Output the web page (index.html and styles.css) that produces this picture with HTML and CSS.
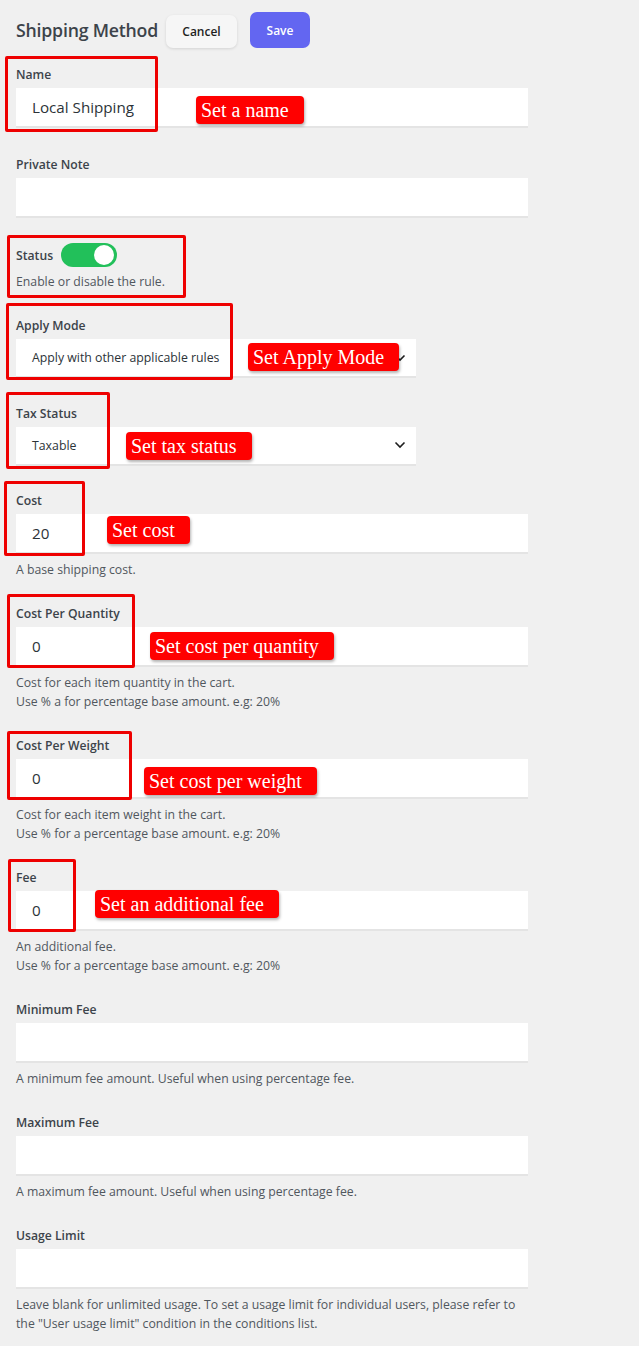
FILE: index.html
```html
<!DOCTYPE html>
<html lang="en">
<head>
<meta charset="utf-8">
<title>Shipping Method</title>
<link rel="stylesheet" href="styles.css">
</head>
<body>
<div class="page">
  <div class="header">
    <h1 class="title">Shipping Method</h1>
    <button class="btn btn-cancel">Cancel</button>
    <button class="btn btn-save">Save</button>
  </div>

  <div class="field">
    <div class="label">Name</div>
    <div class="input"><span class="val">Local Shipping</span></div>
    <div class="mark mark-name"></div>
    <div class="note note-name">Set a name</div>
  </div>

  <div class="field">
    <div class="label">Private Note</div>
    <div class="input"></div>
  </div>

  <div class="field">
    <div class="status-row">
      <div class="label label-inline">Status</div>
      <div class="toggle"><span class="knob"></span></div>
    </div>
    <div class="desc desc-status">Enable or disable the rule.</div>
    <div class="mark mark-status"></div>
  </div>

  <div class="field field-select">
    <div class="label">Apply Mode</div>
    <div class="select"><span class="sval">Apply with other applicable rules</span>
      <svg class="chev" viewBox="0 0 12 8" width="12" height="8"><path d="M1.5 1.5 L6 6 L10.5 1.5" fill="none" stroke="#1e1e1e" stroke-width="1.6"/></svg>
    </div>
    <div class="mark mark-apply"></div>
    <div class="note note-apply">Set Apply Mode</div>
  </div>

  <div class="field field-select">
    <div class="label">Tax Status</div>
    <div class="select"><span class="sval">Taxable</span>
      <svg class="chev" viewBox="0 0 12 8" width="12" height="8"><path d="M1.5 1.5 L6 6 L10.5 1.5" fill="none" stroke="#1e1e1e" stroke-width="1.6"/></svg>
    </div>
    <div class="mark mark-tax"></div>
    <div class="note note-tax">Set tax status</div>
  </div>

  <div class="field">
    <div class="label">Cost</div>
    <div class="input"><span class="val">20</span></div>
    <div class="desc">A base shipping cost.</div>
    <div class="mark mark-cost"></div>
    <div class="note note-cost">Set cost</div>
  </div>

  <div class="field">
    <div class="label">Cost Per Quantity</div>
    <div class="input"><span class="val">0</span></div>
    <div class="desc">Cost for each item quantity in the cart.<br>Use % a for percentage base amount. e.g: 20%</div>
    <div class="mark mark-cpq"></div>
    <div class="note note-cpq">Set cost per quantity</div>
  </div>

  <div class="field">
    <div class="label">Cost Per Weight</div>
    <div class="input"><span class="val">0</span></div>
    <div class="desc">Cost for each item weight in the cart.<br>Use % for a percentage base amount. e.g: 20%</div>
    <div class="mark mark-cpw"></div>
    <div class="note note-cpw">Set cost per weight</div>
  </div>

  <div class="field">
    <div class="label">Fee</div>
    <div class="input"><span class="val">0</span></div>
    <div class="desc">An additional fee.<br>Use % for a percentage base amount. e.g: 20%</div>
    <div class="mark mark-fee"></div>
    <div class="note note-fee">Set an additional fee</div>
  </div>

  <div class="field">
    <div class="label">Minimum Fee</div>
    <div class="input"></div>
    <div class="desc">A minimum fee amount. Useful when using percentage fee.</div>
  </div>

  <div class="field">
    <div class="label">Maximum Fee</div>
    <div class="input"></div>
    <div class="desc">A maximum fee amount. Useful when using percentage fee.</div>
  </div>

  <div class="field">
    <div class="label">Usage Limit</div>
    <div class="input"></div>
    <div class="desc">Leave blank for unlimited usage. To set a usage limit for individual users, please refer to<br>the "User usage limit" condition in the conditions list.</div>
  </div>
</div>
</body>
</html>
```

FILE: styles.css
```css
* { box-sizing: border-box; }

html, body {
  margin: 0;
  padding: 0;
  background: #f0f0f0;
}

body {
  font-family: "Open Sans", "Noto Sans", "Liberation Sans", sans-serif;
  color: #3c434a;
}

.page {
  width: 639px;
  padding: 12px 0 0 16px;
}

.header {
  display: flex;
  align-items: center;
  height: 36px;
  margin-bottom: 16px;
}

.title {
  margin: 0 8px 0 0;
  font-size: 17.7px;
  font-weight: 600;
  color: #3c434a;
  letter-spacing: -0.2px;
}

.btn {
  font-family: inherit;
  border: none;
  font-size: 12px;
  font-weight: 600;
  border-radius: 7px;
  cursor: pointer;
}

.btn-cancel {
  width: 71px;
  height: 33px;
  margin-top: 3px;
  background: #f6f6f6;
  color: #1e1e1e;
  box-shadow: 0 1px 3px rgba(0, 0, 0, 0.12);
  margin-right: 13px;
}

.btn-save {
  width: 60px;
  height: 36px;
  background: #6366f1;
  color: #ffffff;
}

.field {
  position: relative;
  margin-bottom: 25.5px;
}

.field-select {
  margin-bottom: 24.5px;
}

.label {
  font-size: 12.2px;
  font-weight: 600;
  line-height: 21px;
  margin-bottom: 3px;
  color: #3c434a;
}

.label-inline {
  margin: 0;
}

.input {
  width: 512px;
  height: 40px;
  background: #ffffff;
  border-bottom: 2px solid #e4e4e4;
  display: flex;
  align-items: center;
  padding-left: 16px;
}

.val {
  font-size: 15.2px;
  color: #2c3338;
}

.select {
  width: 400px;
  height: 39px;
  background: #ffffff;
  border-bottom: 2px solid #e4e4e4;
  display: flex;
  align-items: center;
  justify-content: space-between;
  padding: 0 10px 0 16px;
}

.sval {
  font-size: 12.3px;
  color: #2c3338;
}

.chev {
  display: block;
}

.desc {
  font-size: 12.25px;
  line-height: 19px;
  color: #50575e;
  margin-top: 6px;
  margin-bottom: -1.5px;
}

.desc-status {
  margin-top: 5px;
}

.status-row {
  display: flex;
  align-items: center;
  gap: 8px;
  height: 24px;
}

.toggle {
  width: 56px;
  height: 24px;
  border-radius: 12px;
  background: #22c05a;
  position: relative;
}

.knob {
  position: absolute;
  right: 3px;
  top: 2px;
  width: 20px;
  height: 20px;
  border-radius: 50%;
  background: #ffffff;
}

.mark {
  position: absolute;
  border: 3px solid #ee0000;
  border-radius: 2px;
  pointer-events: none;
}

.note {
  position: absolute;
  background: #ff0000;
  color: #ffffff;
  font-family: "Liberation Serif", "Times New Roman", serif;
  font-size: 20px;
  line-height: 28px;
  height: 28px;
  padding: 0 15px 0 5px;
  border-radius: 4px;
  white-space: nowrap;
  box-shadow: 1px 2px 3px rgba(0, 0, 0, 0.3);
}

.mark-name { left: -11px; top: -8px; width: 153px; height: 76px; }
.note-name { left: 180px; top: 32px; }

.mark-status { left: -9px; top: -8px; width: 179px; height: 63px; }

.mark-apply { left: -10px; top: -12px; width: 227px; height: 77px; }
.note-apply { left: 232px; top: 28px; }

.mark-tax { left: -10px; top: -11px; width: 104px; height: 77px; }
.note-tax { left: 110px; top: 29px; }

.mark-cost { left: -12px; top: -9px; width: 81px; height: 75px; }
.note-cost { left: 91px; top: 26px; }

.mark-cpq { left: -9px; top: -9px; width: 128px; height: 74px; }
.note-cpq { left: 134px; top: 29px; }

.mark-cpw { left: -9px; top: -4px; width: 125px; height: 69px; }
.note-cpw { left: 128px; top: 32px; }

.mark-fee { left: -8px; top: -8px; width: 68px; height: 73px; }
.note-fee { left: 79px; top: 23px; }
```
